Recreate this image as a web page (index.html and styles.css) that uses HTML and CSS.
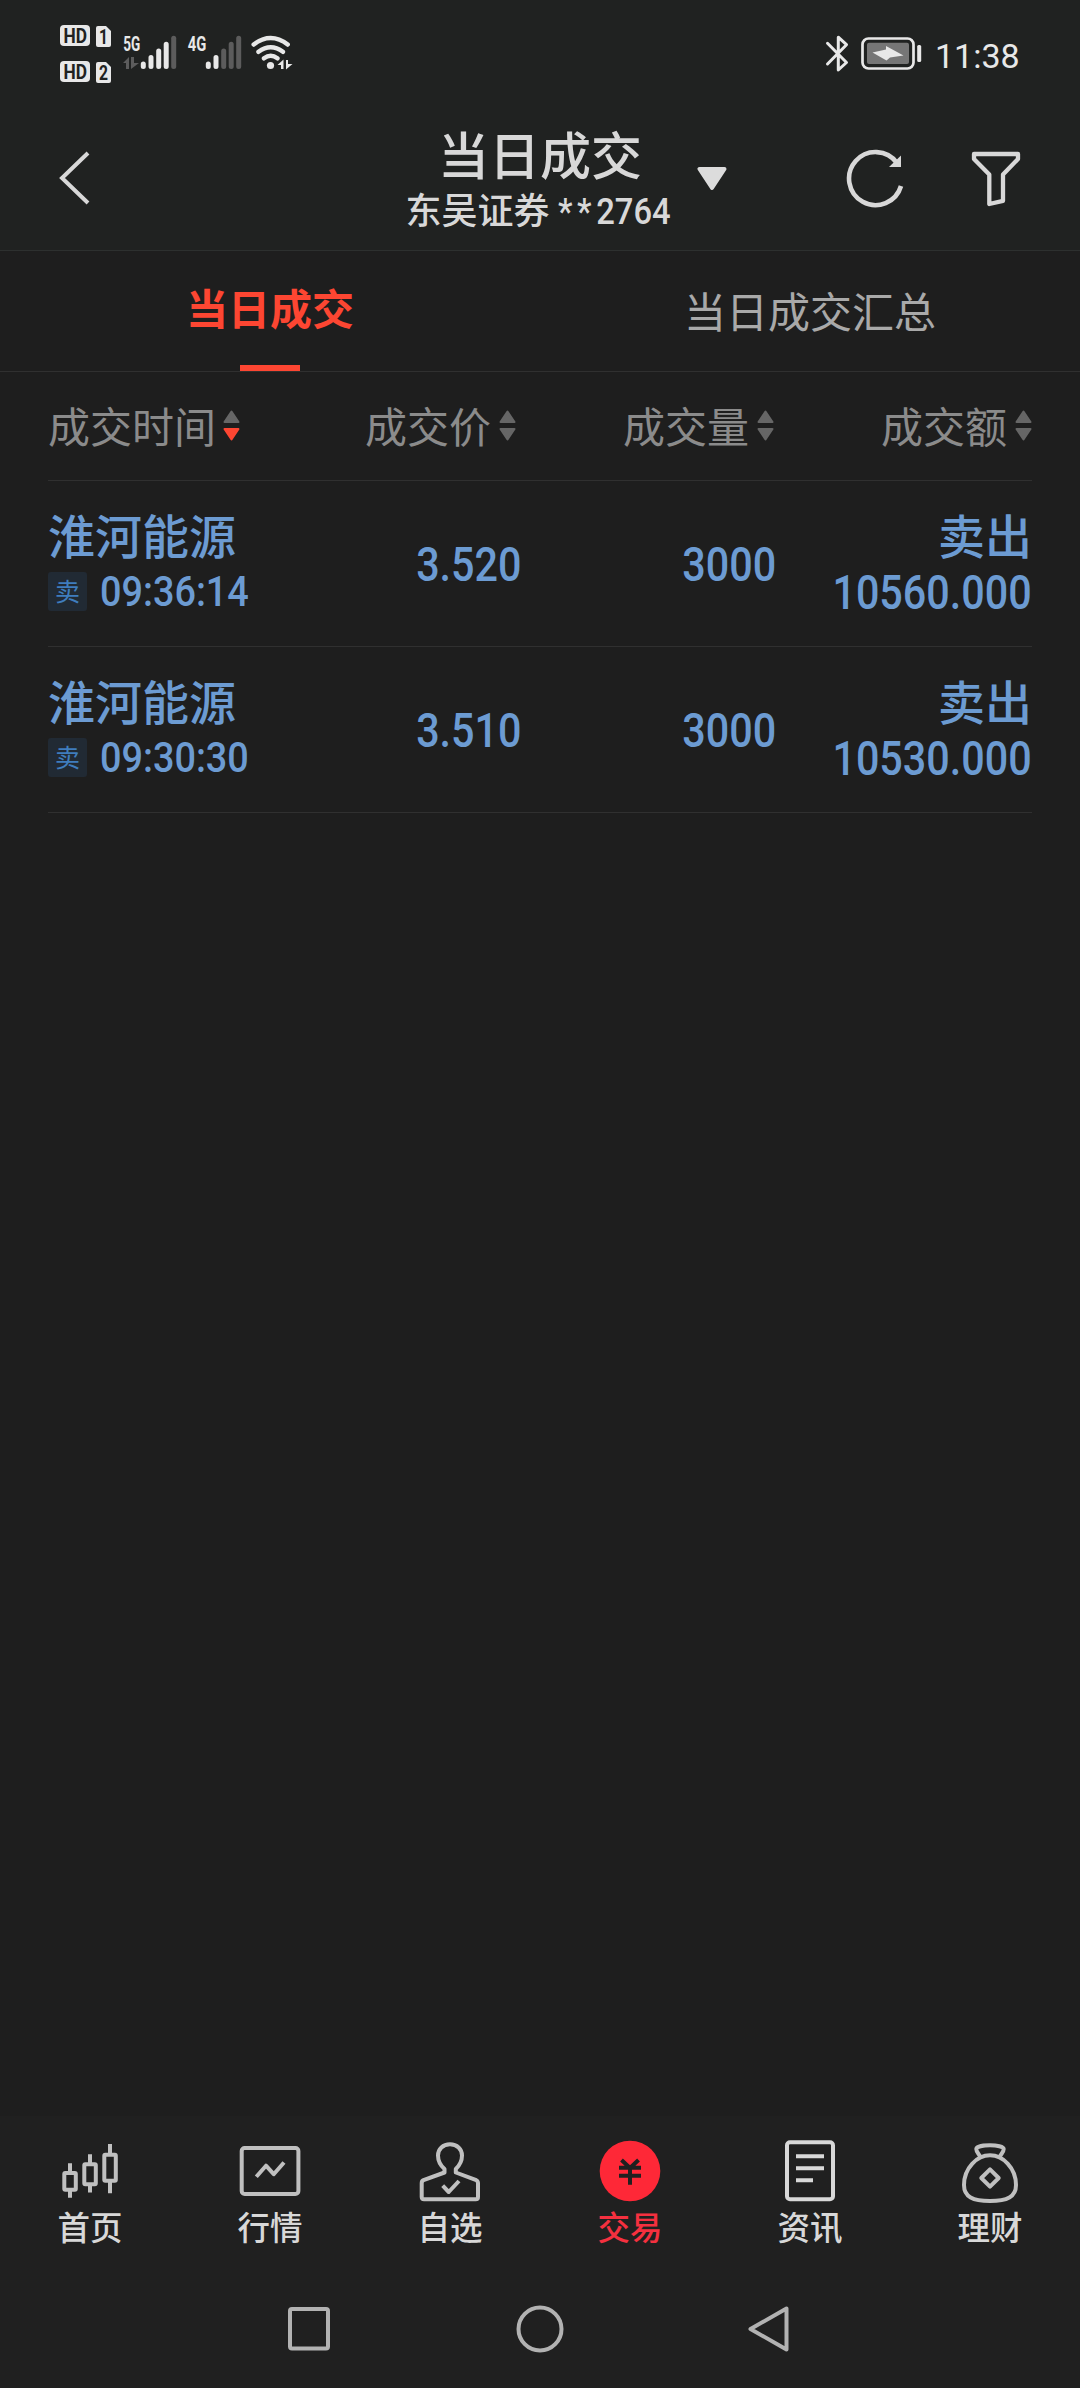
FILE: index.html
```html
<!doctype html>
<html lang="zh-CN">
    <head>
        <meta charset="UTF-8" />
        <meta name="viewport" content="width=device-width, initial-scale=1.0" />
        <title>当日成交</title>
        <link rel="stylesheet" href="styles.css">
    </head>
    <body>
        <header class="top">
            <div class="status-bar">
                <svg class="hd-icon" viewBox="59 24 54 60">
                    <rect x="60" y="25" width="30" height="21" rx="4" />
                    <path d="M98 26h8l5 5v14a2 2 0 0 1-2 2H98a2 2 0 0 1-2-2V28a2 2 0 0 1 2-2z" />
                    <rect x="60" y="61" width="30" height="21" rx="4" />
                    <path d="M98 62h8l5 5v14a2 2 0 0 1-2 2H98a2 2 0 0 1-2-2V64a2 2 0 0 1 2-2z" />
                    <text x="63.5" y="42.5" textLength="23.5" lengthAdjust="spacingAndGlyphs">HD</text>
                    <text x="99" y="43.5" textLength="9" lengthAdjust="spacingAndGlyphs">1</text>
                    <text x="63.5" y="78.5" textLength="23.5" lengthAdjust="spacingAndGlyphs">HD</text>
                    <text x="99" y="79.5" textLength="9" lengthAdjust="spacingAndGlyphs">2</text>
                </svg>
                <svg class="signal signal-5g" viewBox="122 30 56 44">
                    <text x="123.3" y="50.5" textLength="17" lengthAdjust="spacingAndGlyphs">5G</text>
                    <path class="off-fill" d="M123 63l6-6v12h-3v-6zM131 57h3v6h5l-8 6z" />
                    <path class="bar" d="M143.3 64v2.5M151 57.5v9M158.7 51v15.5M166.2 44.3v22.2" />
                    <path class="bar off" d="M173.7 38.3v28.2" />
                </svg>
                <svg class="signal signal-4g" viewBox="187 30 56 44">
                    <text x="187.8" y="50.5" textLength="18.5" lengthAdjust="spacingAndGlyphs">4G</text>
                    <path class="bar" d="M208.3 64v2.5M216 57.5v9" />
                    <path class="bar off" d="M223.7 51v15.5M231.2 44.3v22.2M238.7 38.3v28.2" />
                </svg>
                <svg class="wifi" viewBox="250 30 44 44">
                    <path d="M253.7 44.5q17-13 34 0M258.5 51.8q12.2-9 24.4 0M264 58.3q6.7-5 13.4 0" />
                    <circle cx="270.5" cy="65.5" r="3.6" />
                    <path class="fill" d="M277.5 65l6-5.5v9.5h-2.5v-4zM286 60h2v4h4.5l-6.5 5.500z" />
                </svg>
                <svg class="bluetooth" viewBox="824 32 28 42">
                    <path d="M828.5 43.3L847.5 62.5 839.3 70V37.2L847.5 44.7 828.5 64" />
                </svg>
                <svg class="battery" viewBox="860 34 66 40">
                    <rect class="case" x="863.5" y="38.5" width="51" height="30" rx="6" />
                    <rect class="level" x="868" y="42.7" width="42" height="21.3" rx="2" />
                    <path class="bolt" d="M873.5 52.5L887 49.5V46L904.5 55.5 891 57.5 887.5 60.5z" />
                    <rect class="bolt" x="918.2" y="45" width="4" height="17" rx="1.5" />
                </svg>
                <span class="clock">11:38</span>
            </div>
            <div class="title-bar">
                <svg class="back" viewBox="0 0 36 60">
                    <path d="M31 4L5 29l26 25" />
                </svg>
                <div class="title">
                    <h1>当日成交</h1>
                    <p>东吴证券 <span class="account"><span class="mask">**</span>2764</span></p>
                </div>
                <svg class="caret" viewBox="0 0 30 24">
                    <path d="M2.5 2h25L15 21z" />
                </svg>
                <svg class="refresh" viewBox="846 148 60 60">
                    <path class="line" d="M897 162A26.5 26.5 0 1 0 901 185" />
                    <path class="arrow" d="M901 154.5V166H889z" />
                </svg>
                <svg class="filter" viewBox="970 148 52 60">
                    <path d="M974 153h44v5l-15 15.5v26.3L989.3 203v-29.5L974 158z" />
                </svg>
            </div>
        </header>

        <nav class="tabs">
            <a class="tab active">当日成交</a>
            <a class="tab">当日成交汇总</a>
        </nav>

        <main class="deals">
            <div class="deals-head">
                <div class="col">成交时间
                    <svg class="sort desc" viewBox="0 0 17 31"><path d="M8.5 1.5l7 10.5h-14z" /><path class="down" d="M8.5 29.5l7-10.5h-14z" /></svg>
                </div>
                <div class="col">成交价
                    <svg class="sort" viewBox="0 0 17 31"><path d="M8.5 1.5l7 10.5h-14z" /><path class="down" d="M8.5 29.5l7-10.5h-14z" /></svg>
                </div>
                <div class="col">成交量
                    <svg class="sort" viewBox="0 0 17 31"><path d="M8.5 1.5l7 10.5h-14z" /><path class="down" d="M8.5 29.5l7-10.5h-14z" /></svg>
                </div>
                <div class="col">成交额
                    <svg class="sort" viewBox="0 0 17 31"><path d="M8.5 1.5l7 10.5h-14z" /><path class="down" d="M8.5 29.5l7-10.5h-14z" /></svg>
                </div>
            </div>
            <div class="deal">
                <div class="stock">
                    <div class="name">淮河能源</div>
                    <div class="when"><span class="badge">卖</span><span class="time">09:36:14</span></div>
                </div>
                <div class="num price">3.520</div>
                <div class="num amount">3000</div>
                <div class="total">
                    <div class="side">卖出</div>
                    <div class="num">10560.000</div>
                </div>
            </div>
            <div class="deal">
                <div class="stock">
                    <div class="name">淮河能源</div>
                    <div class="when"><span class="badge">卖</span><span class="time">09:30:30</span></div>
                </div>
                <div class="num price">3.510</div>
                <div class="num amount">3000</div>
                <div class="total">
                    <div class="side">卖出</div>
                    <div class="num">10530.000</div>
                </div>
            </div>
        </main>

        <footer class="bottom">
            <nav class="menu">
                <a class="item">
                    <svg viewBox="0 0 64 70">
                        <rect x="6.3" y="37" width="11.5" height="16.7" rx="1" />
                        <rect x="26.3" y="28.3" width="11.5" height="20" rx="1" />
                        <rect x="46.3" y="18.7" width="11.5" height="26" rx="1" />
                        <path d="M12 27.3V36M12 54.5v7.2M32 18.3V27M32 49.5v7M52 8v9.5M52 46v11.3" />
                    </svg>
                    首页
                </a>
                <a class="item">
                    <svg viewBox="0 0 64 70">
                        <rect x="3.7" y="12" width="56.7" height="46" rx="3" />
                        <path d="M18.3 40.7L28 29.7l7.7 8.500L46 26.5" />
                    </svg>
                    行情
                </a>
                <a class="item">
                    <svg viewBox="0 0 64 70">
                        <path d="M26.5 33C22 29 20 25 20 19.5 20 13 25 8.3 32 8.3S44 13 44 19.5C44 25 42 29 37.8 33v3.5l20.5 7.7q1.7.8 1.7 3V61q0 2.3-2.3 2.3H6q-2.3 0-2.3-2.3V47.2q0-2.2 1.8-3l21-7.7z" />
                        <path d="M24.7 49.7l6 6.3L41 45" />
                    </svg>
                    自选
                </a>
                <a class="item active">
                    <svg viewBox="0 0 64 70">
                        <circle cx="32" cy="35" r="30.3" />
                        <path d="M23.5 24l8.5 8 8.5-8M32 32v16.7M21 31.7h22M21 39.7h22" />
                    </svg>
                    交易
                </a>
                <a class="item bright">
                    <svg viewBox="0 0 64 70">
                        <rect x="9" y="6.3" width="46" height="57" rx="3" />
                        <path d="M18 20.3h28M18 32.3h28M18 44.3h17" />
                    </svg>
                    资讯
                </a>
                <a class="item">
                    <svg viewBox="0 0 64 70">
                        <path d="M32 19.3C19 19.3 6 32 6 49c0 12 9 16 26 16s26-4 26-16C58 32 45 19.3 32 19.3z" />
                        <path d="M22.5 21.5c-1-3.5-4.2-5-4.2-8.5 0-5 27.4-5 27.4 0 0 3.5-3.2 5-4.2 8.5" />
                        <path d="M32 33.3l8.7 8.7-8.7 8.7-8.7-8.7z" />
                    </svg>
                    理财
                </a>
            </nav>
            <div class="system-keys">
                <svg viewBox="0 0 48 50"><rect x="5" y="5" width="38" height="39.5" rx="2" /></svg>
                <svg viewBox="0 0 48 50"><circle cx="24" cy="25" r="21.5" /></svg>
                <svg viewBox="0 0 48 50"><path d="M39.5 4.500v41L3.500 25z" /></svg>
            </div>
        </footer>
    </body>
</html>
```
FILE: styles.css
```css
:root {
    --bg: #1e1e1e;
    --top-bg: #202221;
    --bottom-bg: #202020;
    --line: #303030;
    --light: #d8d8d8;
    --icon: #c0c0c0;
    --blue: #6c9bd2; /* sell orders */
    --red: #fd4632;
}

* {
    box-sizing: border-box;
}

body {
    display: flex;
    flex-direction: column;
    margin: 0;
    height: 2388px;
    background-color: var(--bg);
    color: var(--light);
    font-family: "Noto Sans CJK SC", sans-serif;
}

h1,
p {
    margin: 0;
    font-weight: 500;
}

svg {
    flex: none;
    fill: none;
    stroke-linejoin: round;
}

/* Status bar */
.top {
    height: 251px;
    background-color: var(--top-bg);
    border-bottom: 1px solid #2d302f;
}

.status-bar {
    display: flex;
    align-items: center;
    height: 108px;
    padding-left: 59px;
}

.status-bar text {
    font-family: Roboto, sans-serif;
    font-weight: 700;
    font-size: 20px;
}

.hd-icon {
    width: 54px;
    height: 60px;
    fill: #e8e8e8;
}

.hd-icon text {
    fill: var(--top-bg);
}

.signal {
    width: 56px;
    height: 44px;
    margin: 0 0 4px 9px;
    fill: #e8e8e8;
}

.off-fill {
    fill: #5c5c5c;
}

.bar {
    stroke: #e8e8e8;
    stroke-width: 5;
    stroke-linecap: round;
}

.bar.off {
    stroke: #5c5c5c;
}

.wifi {
    width: 44px;
    height: 44px;
    margin: 0 0 4px 7px;
    stroke: #e8e8e8;
    stroke-width: 4.5;
    stroke-linecap: round;
}

.wifi circle,
.wifi .fill {
    fill: #e8e8e8;
    stroke: none;
}

.bluetooth {
    width: 28px;
    height: 42px;
    margin-left: auto;
    margin-bottom: 2px;
    stroke: #e8e8e8;
    stroke-width: 3;
    stroke-linecap: round;
}

.battery {
    width: 66px;
    height: 40px;
    margin-left: 8px;
}

.case {
    stroke: #e8e8e8;
    stroke-width: 2.7;
}

.level {
    fill: #767676;
}

.bolt {
    fill: #e8e8e8;
}

.clock {
    width: 145px;
    padding-top: 3px;
    margin-left: 10px;
    color: #e8e8e8;
    font: 34px/44px Roboto, sans-serif;
}

/* Page title */
.title-bar {
    display: flex;
    align-items: center;
    height: 142px;
    padding-left: 57px;
}

.back {
    width: 36px;
    height: 60px;
    stroke: var(--light);
    stroke-width: 4;
    stroke-linejoin: miter;
}

.title {
    width: 280px;
    margin-left: 307px;
    text-align: center;
}

.title h1 {
    font-size: 51px;
    line-height: 60px;
}

.title p {
    padding-top: 1px;
    font-size: 36px;
    line-height: 48px;
    white-space: nowrap;
}

.account {
    display: inline-block;
    width: 117px;
    font-family: Roboto, sans-serif;
    text-align: left;
    transform: scaleX(0.91);
    transform-origin: left;
}

.mask {
    letter-spacing: 5px;
}

.caret {
    width: 30px;
    height: 24px;
    margin-left: 17px;
    fill: #dcdcdc;
    stroke: #dcdcdc;
    stroke-width: 4;
}

.refresh {
    width: 60px;
    height: 60px;
    margin-left: 119px;
}

.refresh .line {
    stroke: var(--light);
    stroke-width: 4.6;
}

.refresh .arrow {
    fill: var(--light);
}

.filter {
    width: 52px;
    height: 60px;
    margin-left: 64px;
    stroke: var(--light);
    stroke-width: 4.3;
}

/* Tabs */
.tabs {
    display: flex;
    height: 121px;
    border-bottom: 1px solid var(--line);
}

.tab {
    flex: 1;
    display: flex;
    flex-direction: column;
    align-items: center;
    color: #a9a9a9;
    font-size: 42px;
    line-height: 118px;
}

.tab.active {
    color: var(--red);
    font-weight: 700;
    line-height: 111px;
}

.tab.active::after {
    content: "";
    width: 60px;
    height: 6px;
    margin-top: 3px;
    background-color: var(--red);
}

/* Deals table */
.deals {
    flex: 1;
    padding: 0 48px;
}

.deals-head,
.deal {
    display: grid;
    grid-template-columns: 210px 258px 258px 258px;
    align-items: center;
    justify-items: end;
    border-bottom: 1px solid var(--line);
}

.deals-head {
    height: 109px;
    padding-bottom: 2px;
    color: #8b8b8b;
    font-size: 42px;
    line-height: 60px;
}

.col {
    display: flex;
    align-items: center;
    gap: 8px;
}

.col:first-child {
    justify-self: start;
    gap: 7px;
}

.sort {
    width: 17px;
    height: 31px;
    fill: #666666;
    stroke: #666666;
    stroke-width: 2;
}

.sort.desc .down {
    fill: var(--red);
    stroke: var(--red);
}

.deal {
    height: 166px;
    color: var(--blue);
    font-weight: 500;
}

.stock {
    justify-self: start;
    white-space: nowrap;
}

.name,
.side {
    font-size: 47px;
    line-height: 55px;
}

.side {
    text-align: right;
}

.when {
    display: flex;
    align-items: center;
    gap: 13px;
    height: 61px;
}

.badge {
    width: 39px;
    height: 39px;
    border-radius: 3px;
    background-color: #212a34;
    color: #3f7dbd;
    font-size: 25px;
    font-weight: 400;
    line-height: 36px;
    text-align: center;
}

.time {
    padding-top: 2px;
    font-family: Roboto, sans-serif;
    font-size: 42px;
    line-height: 58px;
    transform: scaleX(0.9);
    transform-origin: left;
}

.num {
    padding-top: 3px;
    font-family: Roboto, sans-serif;
    font-size: 48px;
    line-height: 58px;
    transform: scaleX(0.86);
    transform-origin: right;
}

.price {
    margin-right: -5px;
}

.amount {
    margin-right: -2px;
}

/* Bottom menu and system keys */
.bottom {
    height: 272px;
    background-color: var(--bottom-bg);
}

.menu {
    display: flex;
    height: 154px;
    padding-top: 20px;
}

.item {
    flex: 1;
    display: flex;
    flex-direction: column;
    align-items: center;
    font-size: 32.5px;
    font-weight: 500;
    line-height: 40px;
}

.item svg {
    width: 64px;
    height: 70px;
    stroke: var(--icon);
    stroke-width: 4;
}

.item.bright svg {
    stroke: var(--light);
}

.item.active {
    color: #f5303f;
}

.item.active svg {
    stroke: var(--bottom-bg);
}

.item.active circle {
    fill: #fe2837;
    stroke: none;
}

.system-keys {
    display: flex;
    justify-content: center;
    gap: 183px;
    padding-top: 34px;
}

.system-keys svg {
    width: 48px;
    height: 50px;
    stroke: #b2b2b2;
    stroke-width: 4;
}
```
